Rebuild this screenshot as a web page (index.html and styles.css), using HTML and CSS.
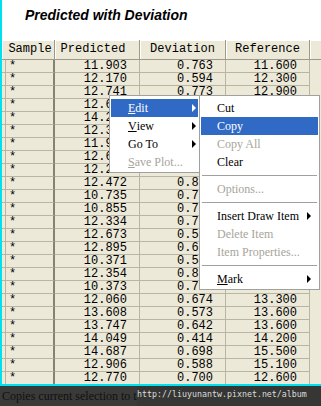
FILE: index.html
```html
<!DOCTYPE html>
<html lang="en">
<head>
  <meta charset="UTF-8">
  <title>Predicted with Deviation</title>
  <link rel="stylesheet" href="styles.css">
</head>
<body>
  <div class="window">
    <div class="frame">
      <div class="title">Predicted with Deviation</div>
      <div class="grid">
        <table class="sheet">
          <thead>
            <tr>
              <th class="c-sample">Sample</th>
              <th class="c-pred">Predicted</th>
              <th class="c-dev">Deviation</th>
              <th class="c-ref">Reference</th>
              <th class="c-fill"></th>
            </tr>
          </thead>
          <tbody>
            <tr><td class="sample">*</td><td>11.903</td><td>0.763</td><td>11.600</td><td class="fill"></td></tr>
            <tr><td class="sample">*</td><td>12.170</td><td>0.594</td><td>12.300</td><td class="fill"></td></tr>
            <tr><td class="sample">*</td><td>12.741</td><td>0.773</td><td>12.900</td><td class="fill"></td></tr>
            <tr><td class="sample">*</td><td>12.618</td><td>0.702</td><td>12.500</td><td class="fill"></td></tr>
            <tr><td class="sample">*</td><td>14.216</td><td>0.688</td><td>14.000</td><td class="fill"></td></tr>
            <tr><td class="sample">*</td><td>12.392</td><td>0.615</td><td>12.700</td><td class="fill"></td></tr>
            <tr><td class="sample">*</td><td>11.947</td><td>0.731</td><td>12.100</td><td class="fill"></td></tr>
            <tr><td class="sample">*</td><td>12.655</td><td>0.580</td><td>12.400</td><td class="fill"></td></tr>
            <tr><td class="sample">*</td><td>12.242</td><td>0.746</td><td>12.600</td><td class="fill"></td></tr>
            <tr><td class="sample">*</td><td>12.472</td><td>0.812</td><td>12.200</td><td class="fill"></td></tr>
            <tr><td class="sample">*</td><td>10.735</td><td>0.729</td><td>10.900</td><td class="fill"></td></tr>
            <tr><td class="sample">*</td><td>10.855</td><td>0.754</td><td>11.200</td><td class="fill"></td></tr>
            <tr><td class="sample">*</td><td>12.334</td><td>0.718</td><td>12.500</td><td class="fill"></td></tr>
            <tr><td class="sample">*</td><td>12.673</td><td>0.561</td><td>12.800</td><td class="fill"></td></tr>
            <tr><td class="sample">*</td><td>12.895</td><td>0.637</td><td>13.000</td><td class="fill"></td></tr>
            <tr><td class="sample">*</td><td>10.371</td><td>0.542</td><td>10.600</td><td class="fill"></td></tr>
            <tr><td class="sample">*</td><td>12.354</td><td>0.826</td><td>12.100</td><td class="fill"></td></tr>
            <tr><td class="sample">*</td><td>10.373</td><td>0.791</td><td>13.100</td><td class="fill"></td></tr>
            <tr><td class="sample">*</td><td>12.060</td><td>0.674</td><td>13.300</td><td class="fill"></td></tr>
            <tr><td class="sample">*</td><td>13.608</td><td>0.573</td><td>13.600</td><td class="fill"></td></tr>
            <tr><td class="sample">*</td><td>13.747</td><td>0.642</td><td>13.600</td><td class="fill"></td></tr>
            <tr><td class="sample">*</td><td>14.049</td><td>0.414</td><td>14.200</td><td class="fill"></td></tr>
            <tr><td class="sample">*</td><td>14.687</td><td>0.698</td><td>15.500</td><td class="fill"></td></tr>
            <tr><td class="sample">*</td><td>12.906</td><td>0.588</td><td>15.100</td><td class="fill"></td></tr>
            <tr><td class="sample">*</td><td>12.770</td><td>0.700</td><td>12.600</td><td class="fill"></td></tr>
          </tbody>
        </table>
      </div>
    </div>

    <div class="status">
      Copies current selection to the clipboard
      <div class="watermark">http://liuyunantw.pixnet.net/album</div>
    </div>

    <!-- context menu + Edit submenu -->
    <div class="menu menu-main">
      <div class="item on"><u>E</u>dit<span class="arrow"></span></div>
      <div class="item"><u>V</u>iew<span class="arrow"></span></div>
      <div class="item">Go To<span class="arrow"></span></div>
      <div class="item off"><u>S</u>ave Plot...</div>
    </div>

    <div class="menu menu-edit">
      <div class="item">Cut</div>
      <div class="item on">Copy</div>
      <div class="item off">Copy All</div>
      <div class="item">Clear</div>
      <div class="sep"></div>
      <div class="item off">Options...</div>
      <div class="sep"></div>
      <div class="item">Insert Draw Item<span class="arrow"></span></div>
      <div class="item off">Delete Item</div>
      <div class="item off">Item Properties...</div>
      <div class="sep"></div>
      <div class="item"><u>M</u>ark<span class="arrow"></span></div>
    </div>
  </div>
</body>
</html>
```

FILE: styles.css
```css
body {
  margin: 0;
  background: #fff;
}

.window {
  position: relative;
  width: 321px;
  height: 406px;
  overflow: hidden;
}

.frame {
  height: 384px;
  border-left: 2px solid #00e1f0;
  border-bottom: 2px solid #00e1f0;
  background: #fff;
}

.title {
  height: 40px;
  box-sizing: border-box;
  padding: 7px 0 0 23px;
  font: italic bold 14px/16px "Liberation Sans", Arial, sans-serif;
  color: #000;
}

.grid {
  height: 344px;
  overflow: hidden;
  background: #ece9d8;
}

.sheet {
  border-collapse: separate;
  border-spacing: 0;
  table-layout: fixed;
  width: 319px;
  font: 12px/12px "Liberation Mono", "Courier New", monospace;
  color: #000;
}

.sheet th {
  box-sizing: border-box;
  padding: 0;
  line-height: 19px;
  font-weight: normal;
  text-align: center;
  white-space: nowrap;
  border-right: 1px solid #9d9a8c;
  border-bottom: 1px solid #9d9a8c;
  box-shadow: inset 1px 1px 0 #fff;
}

.sheet th.c-sample { width: 53px; padding-left: 4px; }
.sheet th.c-pred { width: 85px; padding-right: 8px; }
.sheet th.c-dev { width: 86px; }
.sheet th.c-ref { width: 84px; }
.sheet th.c-fill { width: 11px; border-right: none; }

.sheet td {
  padding: 0 12px 0 0;
  line-height: 12px;
  text-align: right;
  white-space: nowrap;
  overflow: hidden;
  border-right: 1px solid #b9b5a3;
  border-bottom: 1px solid #b9b5a3;
}

.sheet td.sample {
  padding: 0 0 0 7px;
  text-align: left;
  border-right: 2px solid #858274;
  background: linear-gradient(to right, transparent 3px, #b9b5a3 3px, #b9b5a3 4px, transparent 4px);
}

.sheet td.fill {
  border: none;
  padding: 0;
}

.status {
  position: relative;
  height: 20px;
  padding-left: 2px;
  background: #3a3a38;
  font: 12px/21px "Liberation Serif", "Times New Roman", serif;
  color: #111;
  white-space: nowrap;
  overflow: hidden;
}

.watermark {
  position: absolute;
  left: 137px;
  top: 0;
  right: 0;
  bottom: 0;
  background: #363634;
  font: 8.3px/16px "DejaVu Sans Mono", monospace;
  color: #dcdcdc;
}

/* menus */
.menu {
  position: absolute;
  top: 95px;
  box-sizing: border-box;
  padding: 3px 1px 1px;
  background: #fff;
  border: 1px solid #a0a0a0;
  font: 12px/18px "Liberation Serif", "Times New Roman", serif;
  color: #000;
}

.menu-main {
  left: 109px;
  width: 91px;
}

.menu-edit {
  left: 199px;
  width: 121px;
}

.menu .item {
  display: flex;
  align-items: center;
  height: 18px;
  padding-left: 17px;
  white-space: nowrap;
}

.menu-edit .item {
  padding-left: 16px;
}

.menu .item.on {
  background: #316ac5;
  color: #fff;
}

.menu .item.off {
  color: #a7a59a;
}

.menu .arrow {
  width: 0;
  height: 0;
  margin-left: auto;
  margin-right: 2px;
  border-left: 4px solid currentColor;
  border-top: 4px solid transparent;
  border-bottom: 4px solid transparent;
}

.menu-edit .arrow {
  margin-right: 7px;
}

.menu .sep {
  display: flex;
  align-items: center;
  height: 9px;
}

.menu .sep::before {
  content: '';
  flex: 1;
  height: 1px;
  margin: 0 1px;
  background: #a0a0a0;
}
```
